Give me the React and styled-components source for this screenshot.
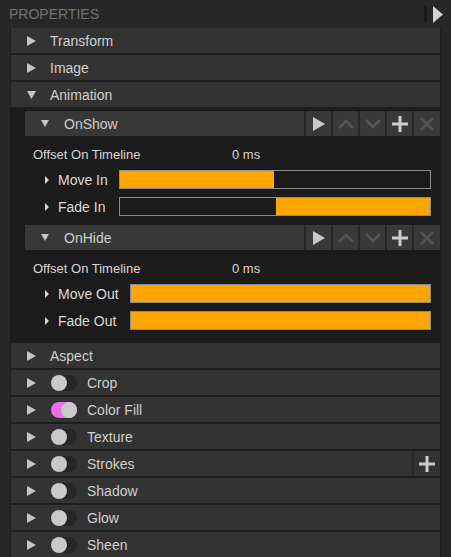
import React from 'react';
import styled, { createGlobalStyle } from 'styled-components';

const GlobalStyle = createGlobalStyle`
  body {
    margin: 0;
    background: #272727;
    font-family: "Liberation Sans", Arial, sans-serif;
  }
`;

const Panel = styled.div`
  width: 451px;
  height: 557px;
  overflow: hidden;
  background: #272727;
  display: flex;
  flex-direction: column;
`;

const TopBar = styled.div`
  height: 28px;
  flex: none;
  display: flex;
  align-items: center;
  padding: 0 8px 0 9px;
`;

const Title = styled.span`
  font-size: 14px;
  color: #727272;
`;

const TopSep = styled.div`
  margin-left: auto;
  width: 3px;
  height: 18px;
  background: #1a1a1a;
  margin-right: 6px;
`;

const List = styled.div`
  margin: 0 10px;
  display: flex;
  flex-direction: column;
  gap: 2px;
  background: #1d1d1d;
  padding: 0 1px;
  flex: 1;
`;

const Row = styled.div`
  height: 25px;
  flex: none;
  display: flex;
  align-items: center;
  background: #333333;
  padding-left: 16px;
  color: #cfcfcf;
  font-size: 14px;
`;

const RowLabel = styled.span`
  margin-left: ${(p) => (p.$afterToggle ? '10px' : '14px')};
`;

const Toggle = styled.div`
  margin-left: 15px;
  width: 26px;
  height: 16px;
  border-radius: 8px;
  background: ${(p) => (p.$on ? '#ec6cec' : '#262626')};
  display: flex;
  justify-content: ${(p) => (p.$on ? 'flex-end' : 'flex-start')};
`;

const Knob = styled.div`
  width: 16px;
  height: 16px;
  border-radius: 50%;
  background: #c9c9c9;
`;

const Expanded = styled.div`
  background: #1b1b1b;
  padding: 2px 0 2px 14px;
  display: flex;
  flex-direction: column;
`;

const SubHeader = styled.div`
  height: 25px;
  display: flex;
  align-items: center;
  background: #383838;
  padding-left: 16px;
  color: #cdcdcd;
  font-size: 14px;
`;

const SubLabel = styled.span`
  margin-left: 15px;
`;

const Tools = styled.div`
  margin-left: auto;
  display: flex;
  height: 100%;
`;

const ToolButton = styled.div`
  width: ${(p) => (p.$wide ? '26px' : '25px')};
  height: 100%;
  border-left: 2px solid #272727;
  background: #393939;
  display: flex;
  align-items: center;
  justify-content: center;
`;

const RowTool = styled(ToolButton)`
  margin-left: auto;
  background: #333333;
  border-left: 2px solid #2a2a2a;
`;

const Body = styled.div`
  padding: 8px 9px 9px 8px;
  display: flex;
  flex-direction: column;
`;

const OffsetRow = styled.div`
  height: 20px;
  display: grid;
  grid-template-columns: 199px auto;
  align-items: center;
  font-size: 13px;
  color: #d6d6d6;
  margin-bottom: 6px;
`;

const Track = styled.div`
  display: grid;
  grid-template-columns: 4px auto 1fr;
  grid-auto-rows: 19px;
  row-gap: 8px;
  align-items: center;
  padding-left: 12px;
  font-size: 14px;
  color: #dadada;
`;

const TrackLabel = styled.span`
  margin-left: 9px;
  margin-right: 11px;
`;

const Bar = styled.div`
  height: 100%;
  box-sizing: border-box;
  border: 1px solid #8c8c8c;
  background: #1a1a1a;
  display: flex;
`;

const Fill = styled.div`
  height: 100%;
  background: #ffa500;
`;

const Arrow = ({ down, size = 9, color = '#c4c4c4' }) => (
  <svg width={size} height={size + 1} viewBox="0 0 10 11">
    {down ? (
      <path d="M0 1 L10 1 L5 10 Z" fill={color} />
    ) : (
      <path d="M0 0 L10 5.5 L0 11 Z" fill={color} />
    )}
  </svg>
);

const SmallArrow = () => (
  <svg width="4" height="8" viewBox="0 0 4 8">
    <path d="M0 0 L4 4 L0 8 Z" fill="#d4d4d4" />
  </svg>
);

const PlayIcon = () => (
  <svg width="12" height="14" viewBox="0 0 12 14">
    <path d="M0 0 L12 7 L0 14 Z" fill="#c8c8c8" />
  </svg>
);

const ChevronIcon = ({ up }) => (
  <svg width="18" height="12" viewBox="0 0 18 12">
    <path
      d={up ? 'M2 10 L9 3 L16 10' : 'M2 2 L9 9 L16 2'}
      stroke="#575757"
      strokeWidth="2.6"
      fill="none"
    />
  </svg>
);

const PlusIcon = () => (
  <svg width="18" height="18" viewBox="0 0 18 18">
    <path d="M9 1 V17 M1 9 H17" stroke="#cccccc" strokeWidth="3" />
  </svg>
);

const CloseIcon = () => (
  <svg width="16" height="16" viewBox="0 0 16 16">
    <path d="M2 2 L14 14 M14 2 L2 14" stroke="#545454" strokeWidth="2.6" />
  </svg>
);

const CollapseIcon = () => (
  <svg width="10" height="17" viewBox="0 0 10 17">
    <path d="M0 0 L10 8.5 L0 17 Z" fill="#d2d2d2" />
  </svg>
);

function Group({ name, tracks }) {
  return (
    <>
      <SubHeader>
        <Arrow down size={8} />
        <SubLabel>{name}</SubLabel>
        <Tools>
          <ToolButton><PlayIcon /></ToolButton>
          <ToolButton><ChevronIcon up /></ToolButton>
          <ToolButton><ChevronIcon /></ToolButton>
          <ToolButton><PlusIcon /></ToolButton>
          <ToolButton $wide><CloseIcon /></ToolButton>
        </Tools>
      </SubHeader>
      <Body>
        <OffsetRow>
          <span>Offset On Timeline</span>
          <span>0 ms</span>
        </OffsetRow>
        <Track>
          {tracks.map((t) => (
            <React.Fragment key={t.label}>
              <SmallArrow />
              <TrackLabel>{t.label}</TrackLabel>
              <Bar>
                <Fill style={{ marginLeft: `${t.from}%`, width: `${t.to - t.from}%` }} />
              </Bar>
            </React.Fragment>
          ))}
        </Track>
      </Body>
    </>
  );
}

const effects = [
  { name: 'Crop', on: false },
  { name: 'Color Fill', on: true },
  { name: 'Texture', on: false },
  { name: 'Strokes', on: false, add: true },
  { name: 'Shadow', on: false },
  { name: 'Glow', on: false },
  { name: 'Sheen', on: false },
];

export default function App() {
  return (
    <Panel>
      <GlobalStyle />
      <TopBar>
        <Title>PROPERTIES</Title>
        <TopSep />
        <CollapseIcon />
      </TopBar>
      <List>
        <Row><Arrow /><RowLabel>Transform</RowLabel></Row>
        <Row><Arrow /><RowLabel>Image</RowLabel></Row>
        <Row><Arrow down /><RowLabel>Animation</RowLabel></Row>
        <Expanded>
          <Group
            name="OnShow"
            tracks={[
              { label: 'Move In', from: 0, to: 49.7 },
              { label: 'Fade In', from: 50.3, to: 100 },
            ]}
          />
          <Group
            name="OnHide"
            tracks={[
              { label: 'Move Out', from: 0, to: 100 },
              { label: 'Fade Out', from: 0, to: 100 },
            ]}
          />
        </Expanded>
        <Row><Arrow /><RowLabel>Aspect</RowLabel></Row>
        {effects.map((e) => (
          <Row key={e.name}>
            <Arrow />
            <Toggle $on={e.on}><Knob /></Toggle>
            <RowLabel $afterToggle>{e.name}</RowLabel>
            {e.add && <RowTool $wide><PlusIcon /></RowTool>}
          </Row>
        ))}
      </List>
    </Panel>
  );
}
